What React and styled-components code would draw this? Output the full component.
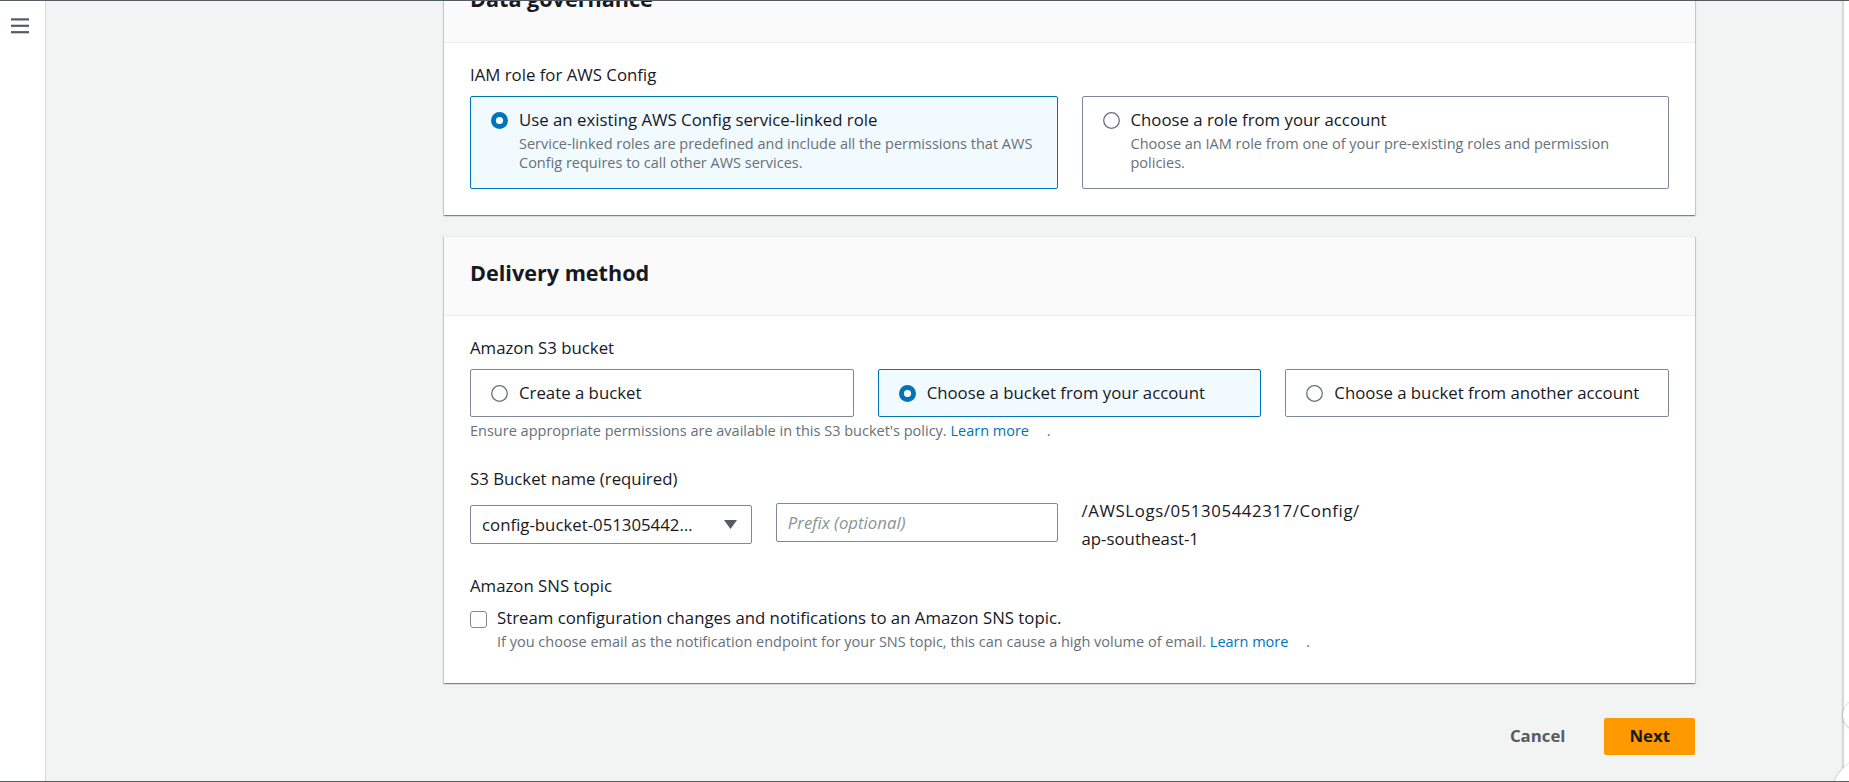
import React from 'react';
import styled, { createGlobalStyle } from 'styled-components';

const GlobalStyle = createGlobalStyle`
  html, body { margin: 0; padding: 0; height: 100%; }
  body {
    font-family: "Open Sans", "Noto Sans", Arial, sans-serif;
    color: #16191f;
    background: #f2f3f3;
    overflow: hidden;
  }
  *, *::before, *::after { box-sizing: border-box; }
`;

const Shell = styled.div`
  position: relative;
  height: 100vh;
  display: flex;
  border-top: 1px solid #545b64;
  border-bottom: 1px solid #545b64;
  overflow: hidden;
`;

const Sidebar = styled.aside`
  flex: 0 0 46px;
  background: #ffffff;
  border-right: 1px solid #d5dbdb;
  box-shadow: 1px 0 0 rgba(0, 28, 36, 0.06);
  padding: 16px 0 0 11px;
`;

const MenuButton = styled.div`
  width: 18px;
  height: 18px;
  color: #545b64;
  display: flex;
`;

const Main = styled.main`
  flex: 1 1 auto;
  min-width: 0;
  padding: 0 148px 0 398px;
  background: #f2f3f3;
`;

const Column = styled.div`
  display: flex;
  flex-direction: column;
  gap: 21px;
  margin-top: -38px;
`;

const RightRail = styled.div`
  flex: 0 0 6px;
  background: #ffffff;
  border-left: 1px solid #d5dbdb;
  box-shadow: -1px 0 1px rgba(0, 28, 36, 0.12);
`;

const Card = styled.section`
  background: #ffffff;
  border-top: 1px solid #eaeded;
  box-shadow: 0 1px 1px 0 rgba(0, 28, 36, 0.3), 1px 1px 1px 0 rgba(0, 28, 36, 0.15),
    -1px 1px 1px 0 rgba(0, 28, 36, 0.15);
`;

const CardHeader = styled.header`
  height: 79px;
  display: flex;
  align-items: center;
  padding: 0 26px 7px;
  background: #fafafa;
  border-bottom: 1px solid #eaeded;
`;

const Heading = styled.h2`
  margin: 0;
  font-size: 21.6px;
  line-height: 26.4px;
  font-weight: 700;
  color: #16191f;
`;

const CardBody = styled.div`
  padding: 20px 26px 26px;
  display: flex;
  flex-direction: column;
`;

const FieldLabel = styled.div`
  font-size: 16.8px;
  line-height: 24px;
  color: #16191f;
  margin-top: ${(p) => p.$top || 0}px;
`;

const TileGrid = styled.div`
  display: grid;
  grid-template-columns: repeat(${(p) => p.$cols}, 1fr);
  gap: 24px;
  margin-top: 9px;
`;

const Tile = styled.div`
  display: flex;
  align-items: flex-start;
  gap: 11px;
  padding: 11px 20px;
  border: 1px solid ${(p) => (p.$selected ? '#0073bb' : '#7d8998')};
  background: ${(p) => (p.$selected ? '#f1faff' : '#ffffff')};
  border-radius: 2px;
`;

const RadioMark = styled.svg`
  flex: 0 0 17px;
  width: 17px;
  height: 17px;
  margin-top: 3.5px;
`;

const TileText = styled.div`
  display: flex;
  flex-direction: column;
  min-width: 0;
`;

const TileLabel = styled.div`
  font-size: 16.8px;
  line-height: 24px;
  color: #16191f;
`;

const Description = styled.div`
  font-size: 14.5px;
  line-height: 19.2px;
  color: #687078;
  margin-top: ${(p) => p.$top || 0}px;
  margin-bottom: ${(p) => p.$bottom || 0}px;
`;

const Link = styled.a`
  color: #0073bb;
  text-decoration: none;
`;

const IconGap = styled.span`
  display: inline-block;
  width: 14px;
`;

const FieldRow = styled.div`
  display: grid;
  grid-template-columns: repeat(4, 1fr);
  gap: 24px;
  align-items: start;
  margin-top: 6.4px;
`;

const SelectBox = styled.div`
  height: 39px;
  margin-top: 8px;
  display: flex;
  align-items: center;
  padding: 0 14px 0 11px;
  border: 1px solid #7d8998;
  border-radius: 2px;
  background: #ffffff;
`;

const SelectValue = styled.span`
  max-width: 217px;
  font-size: 16.8px;
  line-height: 24px;
  white-space: nowrap;
  overflow: hidden;
  text-overflow: ellipsis;
  color: #16191f;
`;

const Caret = styled.svg`
  margin-left: auto;
  flex: 0 0 13px;
  width: 13px;
  height: 9px;
`;

const TextInput = styled.input`
  display: block;
  width: 100%;
  height: 39px;
  margin-top: 6px;
  padding: 0 11px;
  border: 1px solid #7d8998;
  border-radius: 2px;
  background: #ffffff;
  font-family: inherit;
  font-size: 16.8px;
  color: #16191f;
  outline: none;
  &::placeholder {
    color: #879596;
    font-style: italic;
  }
`;

const PathText = styled.div`
  font-size: 16.8px;
  line-height: 27.7px;
  color: #16191f;
  white-space: nowrap;
`;

const PathLine = styled.span`
  display: block;
  letter-spacing: ${(p) => p.$spacing || 0}px;
`;

const CheckRow = styled.label`
  display: flex;
  align-items: flex-start;
  gap: 10px;
  margin-top: 8px;
`;

const CheckBox = styled.span`
  flex: 0 0 17px;
  width: 17px;
  height: 17px;
  margin-top: 5.2px;
  border: 1px solid #7d8998;
  border-radius: 3px;
  background: #ffffff;
`;

const Footer = styled.div`
  display: flex;
  justify-content: flex-end;
  align-items: center;
  gap: 19px;
  margin-top: 14px;
`;

const Button = styled.button`
  height: 37px;
  padding: 0 ${(p) => (p.$primary ? '25px' : '20px')};
  border: none;
  border-radius: 2px;
  background: ${(p) => (p.$primary ? '#ff9900' : 'transparent')};
  color: ${(p) => (p.$primary ? '#16191f' : '#545b64')};
  font-family: inherit;
  font-size: 16.8px;
  line-height: 24px;
  font-weight: 700;
  cursor: pointer;
`;

const Bubble = styled.div`
  position: absolute;
  left: ${(p) => p.$x}px;
  top: ${(p) => p.$y}px;
  width: ${(p) => p.$size}px;
  height: ${(p) => p.$size}px;
  border-radius: 50%;
  background: #ffffff;
  box-shadow: 0 0 0 1px rgba(0, 28, 36, 0.08), 0 1px 3px rgba(0, 28, 36, 0.18);
`;

function Radio({ checked }) {
  return (
    <RadioMark viewBox="0 0 17 17" aria-hidden="true">
      {checked ? (
        <>
          <circle cx="8.5" cy="8.5" r="8.5" fill="#0073bb" />
          <circle cx="8.5" cy="8.5" r="3.6" fill="#ffffff" />
        </>
      ) : (
        <circle cx="8.5" cy="8.5" r="7.8" fill="#ffffff" stroke="#687078" strokeWidth="1.3" />
      )}
    </RadioMark>
  );
}

function Hamburger() {
  return (
    <MenuButton>
      <svg width="18" height="18" viewBox="0 0 18 18" aria-hidden="true">
        <g stroke="currentColor" strokeWidth="2.2">
          <line x1="0" y1="2.4" x2="18" y2="2.4" />
          <line x1="0" y1="8.8" x2="18" y2="8.8" />
          <line x1="0" y1="15.2" x2="18" y2="15.2" />
        </g>
      </svg>
    </MenuButton>
  );
}

function OptionTile({ checked, label, description }) {
  return (
    <Tile $selected={checked}>
      <Radio checked={checked} />
      <TileText>
        <TileLabel>{label}</TileLabel>
        {description && (
          <Description $top={2} $bottom={5}>
            {description}
          </Description>
        )}
      </TileText>
    </Tile>
  );
}

export default function App() {
  return (
    <>
      <GlobalStyle />
      <Shell>
        <Sidebar>
          <Hamburger />
        </Sidebar>
        <Main>
          <Column>
            <Card>
              <CardHeader>
                <Heading>Data governance</Heading>
              </CardHeader>
              <CardBody>
                <FieldLabel>IAM role for AWS Config</FieldLabel>
                <TileGrid $cols={2}>
                  <OptionTile
                    checked
                    label="Use an existing AWS Config service-linked role"
                    description="Service-linked roles are predefined and include all the permissions that AWS Config requires to call other AWS services."
                  />
                  <OptionTile
                    label="Choose a role from your account"
                    description="Choose an IAM role from one of your pre-existing roles and permission policies."
                  />
                </TileGrid>
              </CardBody>
            </Card>

            <Card>
              <CardHeader>
                <Heading>Delivery method</Heading>
              </CardHeader>
              <CardBody>
                <FieldLabel>Amazon S3 bucket</FieldLabel>
                <TileGrid $cols={3}>
                  <OptionTile label="Create a bucket" />
                  <OptionTile checked label="Choose a bucket from your account" />
                  <OptionTile label="Choose a bucket from another account" />
                </TileGrid>
                <Description $top={4}>
                  Ensure appropriate permissions are available in this S3 bucket's policy.{' '}
                  <Link href="#">Learn more</Link>
                  <IconGap /> .
                </Description>

                <FieldLabel $top={26}>S3 Bucket name (required)</FieldLabel>
                <FieldRow>
                  <SelectBox>
                    <SelectValue>config-bucket-051305442317</SelectValue>
                    <Caret viewBox="0 0 13 9" aria-hidden="true">
                      <path d="M0 0 H13 L6.5 9 Z" fill="#545b64" />
                    </Caret>
                  </SelectBox>
                  <TextInput placeholder="Prefix (optional)" />
                  <PathText>
                    <PathLine $spacing={0.6}>/AWSLogs/051305442317/Config/</PathLine>
                    <PathLine>ap-southeast-1</PathLine>
                  </PathText>
                </FieldRow>

                <FieldLabel $top={21.4}>Amazon SNS topic</FieldLabel>
                <CheckRow>
                  <CheckBox />
                  <TileText>
                    <TileLabel>Stream configuration changes and notifications to an Amazon SNS topic.</TileLabel>
                    <Description $top={2.7} $bottom={5.3}>
                      If you choose email as the notification endpoint for your SNS topic, this can cause a
                      high volume of email. <Link href="#">Learn more</Link>
                      <IconGap /> .
                    </Description>
                  </TileText>
                </CheckRow>
              </CardBody>
            </Card>

            <Footer>
              <Button>Cancel</Button>
              <Button $primary>Next</Button>
            </Footer>
          </Column>
        </Main>
        <RightRail />
        <Bubble $x={1843} $y={699} $size={30} />
        <Bubble $x={1832} $y={756} $size={76} />
      </Shell>
    </>
  );
}
